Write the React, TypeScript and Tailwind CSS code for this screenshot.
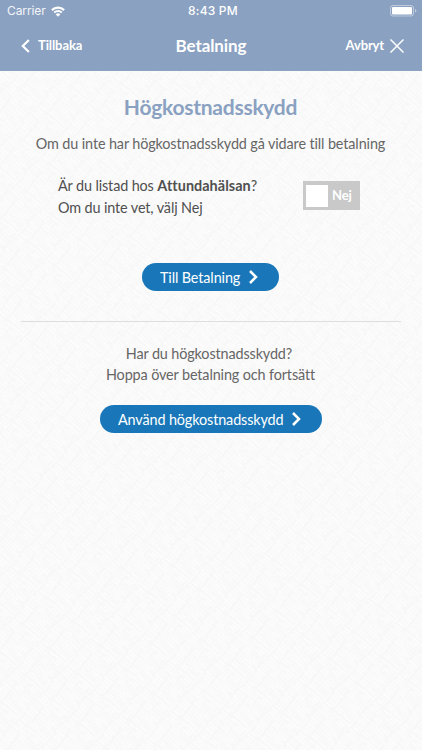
import React, { useState } from "react";

type iconProps = {
  className?: string;
};

type pillProps = {
  text: string;
  className?: string;
};

function WifiIcon() {
  return (
    <svg width="14" height="11" viewBox="0 0 14 11" fill="none" stroke="white">
      <path d="M0.9 4.1a8.6 8.6 0 0 1 12.2 0" strokeWidth="2.2" />
      <path d="M3.2 6.6a5.4 5.4 0 0 1 7.6 0" strokeWidth="2" />
      <path d="M7 10.8L4.7 8.5a3.2 3.2 0 0 1 4.6 0z" fill="white" stroke="none" />
    </svg>
  );
}

function BatteryIcon() {
  return (
    <svg width="27" height="12" viewBox="0 0 27 12" fill="none">
      <rect x="0.5" y="0.5" width="23" height="10.5" rx="2.5" stroke="white" strokeOpacity="0.45" />
      <rect x="2" y="2" width="20" height="7.5" rx="1" fill="white" />
      <path d="M25 4v3.6c.9-.3 1.4-1 1.4-1.8S25.9 4.3 25 4z" fill="white" fillOpacity="0.45" />
    </svg>
  );
}

function ChevronLeft() {
  return (
    <svg width="9" height="14" viewBox="0 0 9 14" fill="none" stroke="white" strokeWidth="2.2">
      <path d="M7.9 1L1.8 7l6.1 6" />
    </svg>
  );
}

function ChevronRight({ className }: iconProps) {
  return (
    <svg className={className} width="9" height="14" viewBox="0 0 9 14" fill="none" stroke="white" strokeWidth="2.5">
      <path d="M1 1l6 6-6 6" />
    </svg>
  );
}

function CloseIcon() {
  return (
    <svg width="14" height="14" viewBox="0 0 14 14" stroke="white" strokeWidth="1.5">
      <path d="M0.5 0.5l13 13M13.5 0.5l-13 13" />
    </svg>
  );
}

// faint woven paper behind the content
function Weave() {
  return (
    <svg className="absolute inset-0 h-full w-full" aria-hidden="true">
      <defs>
        <pattern id="weave" width="36" height="36" patternUnits="userSpaceOnUse" patternTransform="rotate(42)">
          <rect width="36" height="36" fill="#f8f8f8" />
          <path
            d="M0 1h13M3 4h8M0 7h10M16 3h9M18 6h7M15 9h11M29 2h7M28 12h8M27 15h9M2 18h11M0 21h9M1 24h12M15 20h12M17 23h8M16 26h10M29 30h7M28 33h8M3 33h9M17 35h7"
            stroke="#fefefe"
            strokeWidth="1.3"
          />
          <path
            d="M14 0v11M27 3v8M30 5v5M33 4v7M2 9v8M5 10v6M8 9v8M11 9v7M17 11v8M20 11v7M23 12v6M29 17v11M32 18v9M35 17v10M2 26v8M5 26v5M8 25v6M11 26v5M14 24v12M19 27v6M22 28v6M25 27v7"
            stroke="#fefefe"
            strokeWidth="1.3"
          />
          <path d="M0 12h13M15 1v12M27 16v13M2 29h11" stroke="#f7f7f7" />
        </pattern>
      </defs>
      <rect width="100%" height="100%" fill="url(#weave)" />
    </svg>
  );
}

function PillButton({ text, className }: pillProps) {
  return (
    <button className={`flex h-7 items-center rounded-full bg-[#1977b9] pl-[18px] text-[14.4px] tracking-[-0.12px] text-white whitespace-nowrap ${className}`}>
      <span className="pt-[2px]">{text}</span>
      <ChevronRight className="ml-[9px]" />
    </button>
  );
}

export default function App() {
  const [listed, setListed] = useState(false);

  return (
    <div className="flex h-[750px] w-[422px] flex-col overflow-hidden font-['Lato',sans-serif]">
      <header className="h-[71px] shrink-0 bg-[#8aa1c1] text-white">
        <div className="grid h-[22px] grid-cols-3 items-center pr-[5px] pl-[7px] font-['Inter',sans-serif] text-[12px]">
          <div className="flex items-center gap-[5px]">
            <span className="tracking-[-0.1px] opacity-90">Carrier</span>
            <WifiIcon />
          </div>
          <span className="pl-[2px] text-center font-medium tracking-[0.2px]">8:43 PM</span>
          <div className="flex justify-end">
            <BatteryIcon />
          </div>
        </div>
        <nav className="grid h-12 grid-cols-3 items-center pr-[18px] pl-[21px] font-bold">
          <button className="flex items-center gap-[8px] text-[13px] tracking-[-0.1px]">
            <ChevronLeft />
            Tillbaka
          </button>
          <h1 className="pr-[3px] text-center text-[17px] tracking-[-0.1px]">Betalning</h1>
          <button className="flex items-center justify-end gap-[6px] text-[13px] tracking-[-0.15px]">
            Avbryt
            <CloseIcon />
          </button>
        </nav>
      </header>

      <main className="relative flex-1">
        <Weave />
        <div className="relative flex flex-col items-center text-[14.4px] leading-[21.5px] tracking-[-0.12px] text-[#666]">
          <h2 className="mt-[22px] mr-px text-[21px] leading-7 font-bold tracking-[-0.25px] text-[#8aa1c1]">Högkostnadsskydd</h2>
          <p className="mt-[12px] mr-px whitespace-nowrap">Om du inte har högkostnadsskydd gå vidare till betalning</p>

          <div className="mt-[20.5px] flex w-full justify-between pr-[62px] pl-[58px]">
            <p className="whitespace-nowrap text-[#505050]">
              Är du listad hos <b className="tracking-[0.05px]">Attundahälsan</b>?
              <br />
              Om du inte vet, välj Nej
            </p>
            <button
              onClick={() => setListed(!listed)}
              className="mt-[6px] flex h-[29px] w-[57px] items-center bg-[#c9c9c9] pl-[3px] text-[13px] font-bold tracking-[-0.1px] text-white"
            >
              <span className="h-[22px] w-[22px] bg-white" />
              <span className="ml-[4px] pt-px">{listed ? "Ja" : "Nej"}</span>
            </button>
          </div>

          <PillButton text="Till Betalning" className="mr-px mt-[45px] w-[137px]" />
          <hr className="mt-[30px] w-[380px] border-[#dedede]" />
          <p className="mt-[21px] mr-px text-center leading-[21px]">
            <span className="pr-[3px]">Har du högkostnadsskydd?</span>
            <br />
            Hoppa över betalning och fortsätt
          </p>
          <PillButton text="Använd högkostnadsskydd" className="mt-[20px] w-[222px]" />
        </div>
      </main>
    </div>
  );
}
